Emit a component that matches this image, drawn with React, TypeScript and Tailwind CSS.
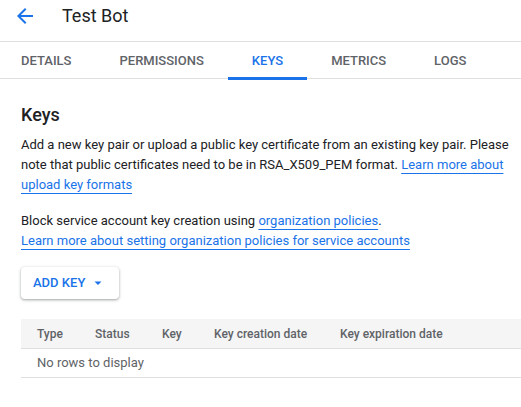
import React from "react";

const tabs = ["DETAILS", "PERMISSIONS", "KEYS", "METRICS", "LOGS"];

function Link({ children }: { children: React.ReactNode }) {
  return (
    <a className="text-[#1a73e8] underline decoration-[#1a73e8] underline-offset-[4px] cursor-pointer">{children}</a>
  );
}

export default function App() {
  return (
    <div className="w-[521px] h-[407px] bg-white overflow-hidden text-[#202124]" style={{ fontFamily: "Roboto, 'Liberation Sans', sans-serif" }}>
      <div className="h-[42px] border-b border-[#e0e0e0] flex items-start pt-[4px]">
        <div className="w-6 h-6 ml-[13px] flex items-center justify-center text-[#1a73e8]">
          <svg width="24" height="24" viewBox="0 0 24 24" fill="currentColor">
            <path d="M20 11H7.83l5.59-5.59L12 4l-8 8 8 8 1.41-1.41L7.83 13H20v-2z" />
          </svg>
        </div>
        <div className="ml-[25px] text-[18px] leading-6 text-[#202124]">Test Bot</div>
      </div>
      <div className="h-[37px] border-b border-[#e0e0e0] flex ml-[-3px]">
        {tabs.map((t) => (
          <div
            key={t}
            className={
              "px-6 h-[37px] flex items-center text-[13px] font-medium relative " +
              (t === "KEYS" ? "text-[#1a73e8]" : "text-[#5f6368]")
            }
          >
            {t}
            {t === "KEYS" && <div className="absolute left-0 right-0 bottom-[-1px] h-[3px] bg-[#1a73e8]" />}
          </div>
        ))}
      </div>
      <div className="pl-[21px]">
        <h1 className="mt-[24px] text-[18px] leading-6 font-medium">Keys</h1>
        <p className="mt-[8px] text-[13px] leading-5 pr-[10px]">
          Add a new key pair or upload a public key certificate from an existing key pair. Please note that public certificates need to be in RSA_X509_PEM format.{" "}
          <Link>Learn more about upload key formats</Link>
        </p>
        <p className="mt-[16px] text-[13px] leading-5">
          Block service account key creation using <Link>organization policies</Link>.
          <br />
          <Link>Learn more about setting organization policies for service accounts</Link>
        </p>
        <button className="mt-[16px] h-[32px] w-[98px] rounded-[4px] bg-white shadow-[0_1px_2px_rgba(60,64,67,0.3),0_1px_3px_1px_rgba(60,64,67,0.15)] flex items-center pl-[12px] text-[13px] font-medium text-[#1a73e8]">
          ADD KEY
          <svg className="ml-[8px]" width="10" height="10" viewBox="0 0 10 10" fill="currentColor">
            <path d="M1.5 3.5h7L5 7z" />
          </svg>
        </button>
        <div className="mt-[20px]">
          <div className="h-[30px] bg-[#f5f5f5] border-b border-[#e0e0e0] flex items-center pl-[16px] text-[12px] font-medium text-[#5f6368]">
            <div className="w-[58px]">Type</div>
            <div className="w-[67px]">Status</div>
            <div className="w-[52px]">Key</div>
            <div className="w-[126px]">Key creation date</div>
            <div>Key expiration date</div>
          </div>
          <div className="h-[29px] border-b border-[#e0e0e0] flex items-center pl-[16px] text-[13px] text-[#5f6368]">
            No rows to display
          </div>
        </div>
      </div>
    </div>
  );
}
